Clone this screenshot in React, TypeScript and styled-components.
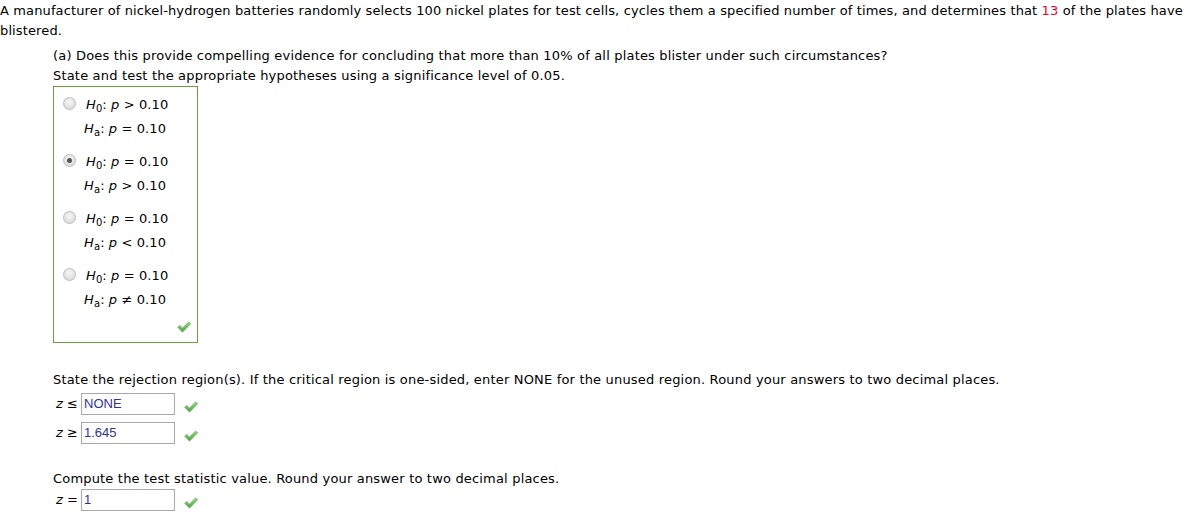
import React from "react";
import styled, { createGlobalStyle } from "styled-components";

const Global = createGlobalStyle`
  html, body { margin: 0; padding: 0; background: #fff; }
  body { font-family: Verdana, "DejaVu Sans", sans-serif; font-size: 13px; color: #000; }
`;

const Page = styled.div`
  width: 1192px;
  line-height: 20px;
  padding-top: 1px;
`;

const Intro = styled.p`
  margin: 0;
  letter-spacing: 0.13px;
`;

const Red = styled.span`
  color: #ee0033;
`;

const Section = styled.div`
  padding-left: 53px;
  margin-top: 5px;
  letter-spacing: 0.18px;
`;

const Line = styled.p<{ $top?: number }>`
  margin: ${(p) => p.$top ?? 0}px 0 0 0;
`;

const ChoiceBox = styled.div`
  width: 145px;
  height: 257px;
  box-sizing: border-box;
  border: 1px solid #6aa23f;
  padding: 6px 0 0 8px;
  position: relative;
  letter-spacing: 0.1px;
`;

const Option = styled.div`
  display: grid;
  grid-template-columns: 15px auto;
  column-gap: 9px;
  margin-bottom: 9px;
`;

const Radio = styled.span<{ $checked?: boolean }>`
  width: 13px;
  height: 13px;
  border-radius: 50%;
  box-sizing: border-box;
  border: 1px solid #bcbcbc;
  background: radial-gradient(circle at 50% 35%, #f6f6f6 0%, #dedede 70%, #d0d0d0 100%);
  margin-top: 4px;
  margin-left: 1px;
  display: flex;
  align-items: center;
  justify-content: center;
  &::after {
    content: "";
    display: ${(p) => (p.$checked ? "block" : "none")};
    width: 5px;
    height: 5px;
    border-radius: 50%;
    background: #555;
  }
`;

const Hyp = styled.div`
  display: flex;
  flex-direction: column;
`;

const HLine = styled.div`
  height: 24px;
  line-height: 24px;
  white-space: nowrap;
`;

const HLineA = styled(HLine)`
  margin-left: -2px;
`;

const I = styled.i`
  font-style: italic;
`;

const Sub = styled.sub`
  font-size: 10px;
  vertical-align: -3px;
  line-height: 0;
`;

const BoxCheck = styled.span`
  position: absolute;
  right: 5px;
  bottom: 9px;
  display: flex;
`;

const FieldRow = styled.div<{ $top?: number }>`
  display: flex;
  align-items: center;
  height: 22px;
  margin-top: ${(p) => p.$top ?? 0}px;
  padding-left: 3px;
`;

const Label = styled.span`
  width: 25px;
  white-space: nowrap;
  letter-spacing: 0;
`;

const Field = styled.div`
  width: 90px;
  height: 20px;
  border: 1px solid #a9a9a9;
  font-family: "Liberation Sans", Arial, sans-serif;
  font-size: 13px;
  letter-spacing: 0;
  line-height: 20px;
  color: #33338a;
  padding-left: 2px;
  box-sizing: content-box;
`;

const FieldCheck = styled.span`
  display: flex;
  margin-left: 8px;
  margin-top: 6px;
`;

const Check = () => (
  <svg width="16" height="12" viewBox="0 0 18 14">
    <defs>
      <linearGradient id="cg" x1="0" y1="0" x2="0" y2="1">
        <stop offset="0" stopColor="#9ad98a" />
        <stop offset="1" stopColor="#4aa244" />
      </linearGradient>
    </defs>
    <path
      d="M1.5 7.2 L4 5 L7.2 8.2 L14.5 1 L17 3.3 L7.2 13 Z"
      fill="url(#cg)"
      stroke="#62a655"
      strokeWidth="0.6"
      strokeLinejoin="round"
    />
  </svg>
);

const options = [
  { h0: ">", ha: "=", checked: false },
  { h0: "=", ha: ">", checked: true },
  { h0: "=", ha: "<", checked: false },
  { h0: "=", ha: "\u2260", checked: false },
];

export default function App() {
  return (
    <Page>
      <Global />
      <Intro>
        A manufacturer of nickel-hydrogen batteries randomly selects 100 nickel plates for test cells, cycles them a
        specified number of times, and determines that <Red>13</Red> of the plates have blistered.
      </Intro>
      <Section>
        <Line>
          (a) Does this provide compelling evidence for concluding that more than 10% of all plates blister under such
          circumstances?
        </Line>
        <Line>State and test the appropriate hypotheses using a significance level of 0.05.</Line>
        <ChoiceBox>
          {options.map((o, i) => (
            <Option key={i}>
              <Radio $checked={o.checked} />
              <Hyp>
                <HLine>
                  <I>H</I>
                  <Sub>0</Sub>: <I>p</I> {o.h0} 0.10
                </HLine>
                <HLineA>
                  <I>H</I>
                  <Sub>a</Sub>: <I>p</I> {o.ha} 0.10
                </HLineA>
              </Hyp>
            </Option>
          ))}
          <BoxCheck>
            <Check />
          </BoxCheck>
        </ChoiceBox>
        <Line $top={27}>
          State the rejection region(s). If the critical region is one-sided, enter NONE for the unused region. Round
          your answers to two decimal places.
        </Line>
        <FieldRow $top={3}>
          <Label>
            <I>z</I> ≤
          </Label>
          <Field>NONE</Field>
          <FieldCheck>
            <Check />
          </FieldCheck>
        </FieldRow>
        <FieldRow $top={7}>
          <Label>
            <I>z</I> ≥
          </Label>
          <Field>1.645</Field>
          <FieldCheck>
            <Check />
          </FieldCheck>
        </FieldRow>
        <Line $top={25}>Compute the test statistic value. Round your answer to two decimal places.</Line>
        <FieldRow $top={0}>
          <Label>
            <I>z</I> =
          </Label>
          <Field>1</Field>
          <FieldCheck>
            <Check />
          </FieldCheck>
        </FieldRow>
      </Section>
    </Page>
  );
}
